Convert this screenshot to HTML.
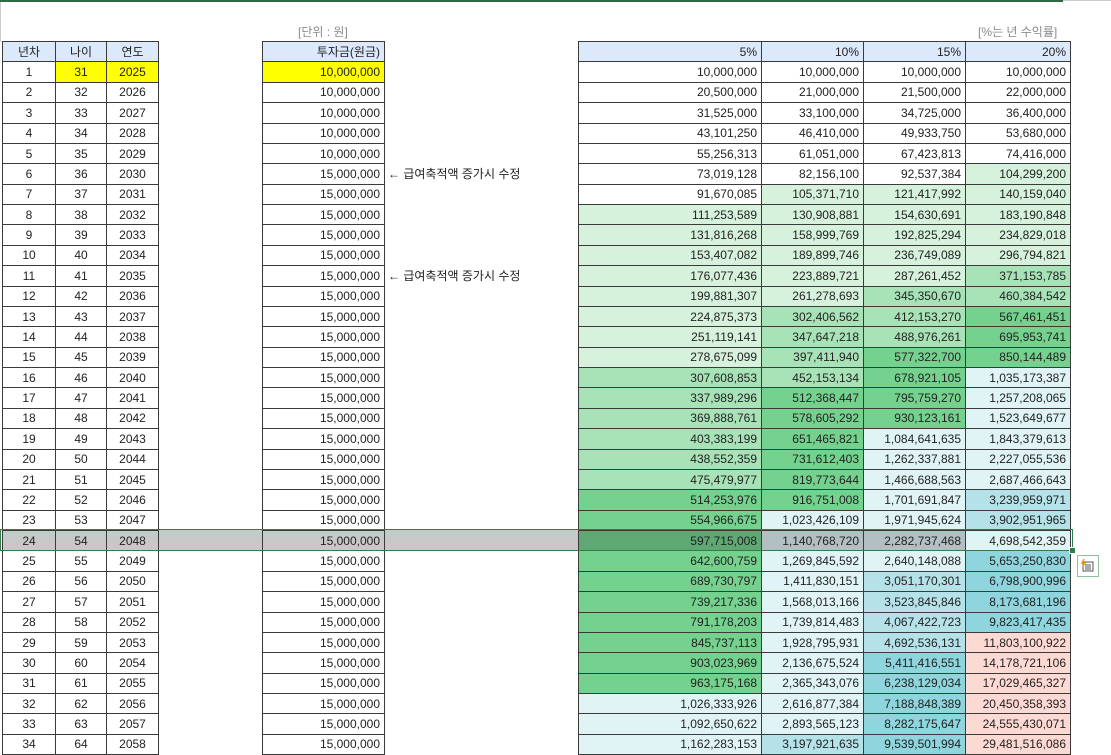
<!DOCTYPE html>
<html><head><meta charset="utf-8"><style>
html,body{margin:0;padding:0;width:1111px;height:746px;overflow:hidden;background:#fff;font-family:"Liberation Sans","Noto Sans CJK KR",sans-serif;font-size:12px;color:#222}
table{position:absolute;border-collapse:collapse;table-layout:fixed;top:41px}
td{border:1px solid #3a3a3a;height:19.38px;padding:0 4px;line-height:18px;white-space:nowrap;overflow:hidden}
.h td{background:#dce9fb;text-align:center}
.c td{text-align:center}
.r td{text-align:right}
.y{background:#ffff00!important}
.g1{background:#d6f2dd}.g2{background:#a8e3b8}.g3{background:#74d28e}
.c1{background:#e0f4f6}.c2{background:#b4e2e8}.c3{background:#8ed5dd}.p{background:#fdd9d3}
.sg{background:#5fa874}.sx{background:#b2c0c3}
.note{position:absolute;font-size:12px;color:#222}
.lbl{position:absolute;top:23px;color:#8a8a8a;font-size:12px}
</style></head><body>
<div style="position:absolute;left:0;top:0;width:1063px;height:2px;background:#2e6b45"></div>
<div style="position:absolute;left:1063px;top:0;width:48px;height:1px;background:#ccc"></div>
<div style="position:absolute;left:0;top:2px;width:1px;height:40px;background:#ccc"></div>
<div style="position:absolute;left:2px;top:530px;width:576px;height:20px;background:#c8c8c8"></div>
<div class="lbl" style="left:298px">[단위 : 원]</div>
<div class="lbl" style="left:978px">[%는 년 수익률]</div>
<div class="note" style="left:388px;top:165px">← 급여축적액 증가시 수정</div>
<div class="note" style="left:388px;top:267px">← 급여축적액 증가시 수정</div>

<table class="c" style="left:2px;width:156px">
<colgroup><col style="width:53px"><col style="width:51px"><col style="width:52px"></colgroup>
<tr class="h"><td>년차</td><td>나이</td><td>연도</td></tr>
<tr><td>1</td><td class="y">31</td><td class="y">2025</td></tr>
<tr><td>2</td><td>32</td><td>2026</td></tr><tr><td>3</td><td>33</td><td>2027</td></tr><tr><td>4</td><td>34</td><td>2028</td></tr><tr><td>5</td><td>35</td><td>2029</td></tr><tr><td>6</td><td>36</td><td>2030</td></tr><tr><td>7</td><td>37</td><td>2031</td></tr><tr><td>8</td><td>38</td><td>2032</td></tr><tr><td>9</td><td>39</td><td>2033</td></tr><tr><td>10</td><td>40</td><td>2034</td></tr><tr><td>11</td><td>41</td><td>2035</td></tr><tr><td>12</td><td>42</td><td>2036</td></tr><tr><td>13</td><td>43</td><td>2037</td></tr><tr><td>14</td><td>44</td><td>2038</td></tr><tr><td>15</td><td>45</td><td>2039</td></tr><tr><td>16</td><td>46</td><td>2040</td></tr><tr><td>17</td><td>47</td><td>2041</td></tr><tr><td>18</td><td>48</td><td>2042</td></tr><tr><td>19</td><td>49</td><td>2043</td></tr><tr><td>20</td><td>50</td><td>2044</td></tr><tr><td>21</td><td>51</td><td>2045</td></tr><tr><td>22</td><td>52</td><td>2046</td></tr><tr><td>23</td><td>53</td><td>2047</td></tr><tr><td>24</td><td>54</td><td>2048</td></tr><tr><td>25</td><td>55</td><td>2049</td></tr><tr><td>26</td><td>56</td><td>2050</td></tr><tr><td>27</td><td>57</td><td>2051</td></tr><tr><td>28</td><td>58</td><td>2052</td></tr><tr><td>29</td><td>59</td><td>2053</td></tr><tr><td>30</td><td>60</td><td>2054</td></tr><tr><td>31</td><td>61</td><td>2055</td></tr><tr><td>32</td><td>62</td><td>2056</td></tr><tr><td>33</td><td>63</td><td>2057</td></tr><tr><td>34</td><td>64</td><td>2058</td></tr>
</table>

<table class="r" style="left:262px;width:123px">
<tr class="h"><td>투자금(원금)</td></tr>
<tr><td class="y">10,000,000</td></tr>
<tr><td>10,000,000</td></tr><tr><td>10,000,000</td></tr><tr><td>10,000,000</td></tr><tr><td>10,000,000</td></tr>
<tr><td>15,000,000</td></tr><tr><td>15,000,000</td></tr><tr><td>15,000,000</td></tr><tr><td>15,000,000</td></tr><tr><td>15,000,000</td></tr><tr><td>15,000,000</td></tr><tr><td>15,000,000</td></tr><tr><td>15,000,000</td></tr><tr><td>15,000,000</td></tr><tr><td>15,000,000</td></tr><tr><td>15,000,000</td></tr><tr><td>15,000,000</td></tr><tr><td>15,000,000</td></tr><tr><td>15,000,000</td></tr><tr><td>15,000,000</td></tr><tr><td>15,000,000</td></tr><tr><td>15,000,000</td></tr><tr><td>15,000,000</td></tr><tr><td>15,000,000</td></tr><tr><td>15,000,000</td></tr><tr><td>15,000,000</td></tr><tr><td>15,000,000</td></tr><tr><td>15,000,000</td></tr><tr><td>15,000,000</td></tr><tr><td>15,000,000</td></tr><tr><td>15,000,000</td></tr><tr><td>15,000,000</td></tr><tr><td>15,000,000</td></tr><tr><td>15,000,000</td></tr>
</table>

<table class="r" style="left:578px;width:492px">
<colgroup><col style="width:183px"><col style="width:102px"><col style="width:102px"><col style="width:105px"></colgroup>
<tr class="h"><td>5%</td><td>10%</td><td>15%</td><td>20%</td></tr>
<tr><td>10,000,000</td><td>10,000,000</td><td>10,000,000</td><td>10,000,000</td></tr>
<tr><td>20,500,000</td><td>21,000,000</td><td>21,500,000</td><td>22,000,000</td></tr>
<tr><td>31,525,000</td><td>33,100,000</td><td>34,725,000</td><td>36,400,000</td></tr>
<tr><td>43,101,250</td><td>46,410,000</td><td>49,933,750</td><td>53,680,000</td></tr>
<tr><td>55,256,313</td><td>61,051,000</td><td>67,423,813</td><td>74,416,000</td></tr>
<tr><td>73,019,128</td><td>82,156,100</td><td>92,537,384</td><td class="g1">104,299,200</td></tr>
<tr><td>91,670,085</td><td class="g1">105,371,710</td><td class="g1">121,417,992</td><td class="g1">140,159,040</td></tr>
<tr><td class="g1">111,253,589</td><td class="g1">130,908,881</td><td class="g1">154,630,691</td><td class="g1">183,190,848</td></tr>
<tr><td class="g1">131,816,268</td><td class="g1">158,999,769</td><td class="g1">192,825,294</td><td class="g1">234,829,018</td></tr>
<tr><td class="g1">153,407,082</td><td class="g1">189,899,746</td><td class="g1">236,749,089</td><td class="g1">296,794,821</td></tr>
<tr><td class="g1">176,077,436</td><td class="g1">223,889,721</td><td class="g1">287,261,452</td><td class="g2">371,153,785</td></tr>
<tr><td class="g1">199,881,307</td><td class="g1">261,278,693</td><td class="g2">345,350,670</td><td class="g2">460,384,542</td></tr>
<tr><td class="g1">224,875,373</td><td class="g2">302,406,562</td><td class="g2">412,153,270</td><td class="g3">567,461,451</td></tr>
<tr><td class="g1">251,119,141</td><td class="g2">347,647,218</td><td class="g2">488,976,261</td><td class="g3">695,953,741</td></tr>
<tr><td class="g1">278,675,099</td><td class="g2">397,411,940</td><td class="g3">577,322,700</td><td class="g3">850,144,489</td></tr>
<tr><td class="g2">307,608,853</td><td class="g2">452,153,134</td><td class="g3">678,921,105</td><td class="c1">1,035,173,387</td></tr>
<tr><td class="g2">337,989,296</td><td class="g3">512,368,447</td><td class="g3">795,759,270</td><td class="c1">1,257,208,065</td></tr>
<tr><td class="g2">369,888,761</td><td class="g3">578,605,292</td><td class="g3">930,123,161</td><td class="c1">1,523,649,677</td></tr>
<tr><td class="g2">403,383,199</td><td class="g3">651,465,821</td><td class="c1">1,084,641,635</td><td class="c1">1,843,379,613</td></tr>
<tr><td class="g2">438,552,359</td><td class="g3">731,612,403</td><td class="c1">1,262,337,881</td><td class="c1">2,227,055,536</td></tr>
<tr><td class="g2">475,479,977</td><td class="g3">819,773,644</td><td class="c1">1,466,688,563</td><td class="c1">2,687,466,643</td></tr>
<tr><td class="g3">514,253,976</td><td class="g3">916,751,008</td><td class="c1">1,701,691,847</td><td class="c2">3,239,959,971</td></tr>
<tr><td class="g3">554,966,675</td><td class="c1">1,023,426,109</td><td class="c1">1,971,945,624</td><td class="c2">3,902,951,965</td></tr>
<tr><td class="sg">597,715,008</td><td class="sx">1,140,768,720</td><td class="sx">2,282,737,468</td><td class="c1">4,698,542,359</td></tr>
<tr><td class="g3">642,600,759</td><td class="c1">1,269,845,592</td><td class="c1">2,640,148,088</td><td class="c3">5,653,250,830</td></tr>
<tr><td class="g3">689,730,797</td><td class="c1">1,411,830,151</td><td class="c2">3,051,170,301</td><td class="c3">6,798,900,996</td></tr>
<tr><td class="g3">739,217,336</td><td class="c1">1,568,013,166</td><td class="c2">3,523,845,846</td><td class="c3">8,173,681,196</td></tr>
<tr><td class="g3">791,178,203</td><td class="c1">1,739,814,483</td><td class="c2">4,067,422,723</td><td class="c3">9,823,417,435</td></tr>
<tr><td class="g3">845,737,113</td><td class="c1">1,928,795,931</td><td class="c2">4,692,536,131</td><td class="p">11,803,100,922</td></tr>
<tr><td class="g3">903,023,969</td><td class="c1">2,136,675,524</td><td class="c3">5,411,416,551</td><td class="p">14,178,721,106</td></tr>
<tr><td class="g3">963,175,168</td><td class="c1">2,365,343,076</td><td class="c3">6,238,129,034</td><td class="p">17,029,465,327</td></tr>
<tr><td class="c1">1,026,333,926</td><td class="c1">2,616,877,384</td><td class="c3">7,188,848,389</td><td class="p">20,450,358,393</td></tr>
<tr><td class="c1">1,092,650,622</td><td class="c1">2,893,565,123</td><td class="c3">8,282,175,647</td><td class="p">24,555,430,071</td></tr>
<tr><td class="c1">1,162,283,153</td><td class="c2">3,197,921,635</td><td class="c3">9,539,501,994</td><td class="p">29,481,516,086</td></tr>
</table>

<div style="position:absolute;left:0;top:529px;width:1071px;height:20px;border:1px solid #2e7d4a"></div>
<div style="position:absolute;left:1069px;top:547px;width:5px;height:5px;background:#2e7d4a;border:1px solid #fff"></div>
<div style="position:absolute;left:1077px;top:555px;width:20px;height:20px;border:1px solid #8fbf9f;background:#fff">
<svg width="20" height="20" viewBox="0 0 20 20"><rect x="5" y="6" width="10" height="9" fill="none" stroke="#555"/><path d="M7 9h6M7 11h6M7 13h6" stroke="#555"/><path d="M6 3l-2 4h3l-2 3" stroke="#e8a200" fill="none" stroke-width="1.5"/></svg>
</div>
</body></html>
